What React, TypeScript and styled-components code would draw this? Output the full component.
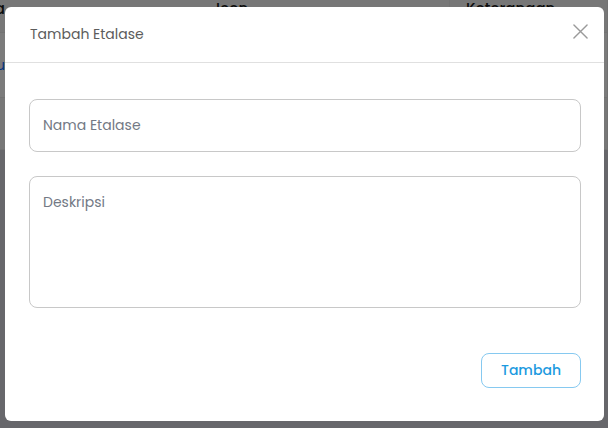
import styled, { createGlobalStyle } from 'styled-components';

const GlobalStyle = createGlobalStyle`
  html, body {
    margin: 0;
    padding: 0;
    background: #ffffff;
    font-family: Poppins, 'Open Sans', 'Liberation Sans', sans-serif;
  }
  * {
    box-sizing: border-box;
  }
`;

const Page = styled.div`
  width: 608px;
  height: 428px;
  overflow: hidden;
  background: #cfcfd6;
`;

const Table = styled.div`
  margin-left: -40px;
  background: #f5f5f5;
`;

const TableRow = styled.div<{ $height: number; $bg?: string; $top?: boolean }>`
  display: grid;
  grid-template-columns: 240px 250px 1fr;
  height: ${({ $height }) => $height}px;
  background: ${({ $bg }) => $bg ?? '#f5f5f5'};
  border-bottom: 1px solid #e4e4e4;
  align-items: ${({ $top }) => ($top ? 'start' : 'center')};
`;

const Cell = styled.div<{ $bold?: boolean; $link?: boolean }>`
  height: 100%;
  padding: 0 16px;
  display: flex;
  align-items: inherit;
  font-size: 15px;
  line-height: 18px;
  font-weight: ${({ $bold }) => ($bold ? 500 : 400)};
  color: ${({ $link }) => ($link ? '#0d6efd' : '#1a1a1a')};
  border-right: 1px solid #e4e4e4;
`;

const FirstCell = styled(Cell)`
  justify-content: flex-end;
  padding-right: 0;
  margin-right: 195px;
  border-right: none;
`;

const Overlay = styled.div`
  position: fixed;
  inset: 0;
  background: rgba(0, 0, 0, 0.5);
  padding: 7px 4px 0 5px;
`;

const Modal = styled.div`
  width: 599px;
  height: 414px;
  background: #ffffff;
  border-radius: 6px;
  display: flex;
  flex-direction: column;
`;

const Header = styled.div`
  height: 56px;
  padding: 0 12px 0 25px;
  display: flex;
  align-items: center;
  justify-content: space-between;
  border-bottom: 1px solid #e0e0e0;
`;

const Title = styled.h5`
  margin: 0;
  font-size: 14px;
  font-weight: 400;
  color: #5c5c5c;
`;

const CloseButton = styled.button`
  width: 24px;
  height: 24px;
  padding: 0;
  border: none;
  background: transparent;
  display: flex;
  align-items: center;
  justify-content: center;
  color: #9a9a9a;
  cursor: pointer;
  margin-top: -6px;
`;

const Body = styled.div`
  padding: 36px 23px 0 24px;
  display: flex;
  flex-direction: column;
  gap: 24px;
`;

const TextInput = styled.input`
  height: 53px;
  width: 100%;
  padding: 0 13px;
  border: 1px solid #c8c8c8;
  border-radius: 8px;
  font-family: inherit;
  font-size: 14px;
  color: #333;
  outline: none;

  &::placeholder {
    color: #737985;
  }
`;

const TextArea = styled.textarea`
  height: 132px;
  width: 100%;
  padding: 15px 13px;
  border: 1px solid #c8c8c8;
  border-radius: 8px;
  font-family: inherit;
  font-size: 14px;
  color: #333;
  resize: none;
  outline: none;

  &::placeholder {
    color: #737985;
  }
`;

const Footer = styled.div`
  display: flex;
  justify-content: flex-end;
  padding: 45px 23px 0 24px;
`;

const SubmitButton = styled.button`
  width: 100px;
  height: 35px;
  border: 1px solid #86c9f0;
  border-radius: 8px;
  background: #ffffff;
  color: #1c9ae0;
  font-family: inherit;
  font-size: 14px;
  font-weight: 500;
  cursor: pointer;
`;

const App = () => {
  return (
    <>
      <GlobalStyle />
      <Page>
        <Table>
          <TableRow $height={33} $bg="#eeeeee" $top>
            <FirstCell $bold>Nama</FirstCell>
            <Cell $bold>Icon</Cell>
            <Cell $bold>Keterangan</Cell>
          </TableRow>
          <TableRow $height={65} $bg="#f6f6f6">
            <FirstCell $link>Baju</FirstCell>
            <Cell />
            <Cell />
          </TableRow>
          <TableRow $height={52} $bg="#efefef">
            <FirstCell />
            <Cell />
            <Cell />
          </TableRow>
        </Table>
        <Overlay>
          <Modal>
            <Header>
              <Title>Tambah Etalase</Title>
              <CloseButton aria-label="Close">
                <svg width="15" height="15" viewBox="0 0 16 16" fill="none">
                  <path d="M1 1L15 15M15 1L1 15" stroke="currentColor" strokeWidth="1.5" strokeLinecap="round" />
                </svg>
              </CloseButton>
            </Header>
            <Body>
              <TextInput placeholder="Nama Etalase" />
              <TextArea placeholder="Deskripsi" />
            </Body>
            <Footer>
              <SubmitButton>Tambah</SubmitButton>
            </Footer>
          </Modal>
        </Overlay>
      </Page>
    </>
  );
};

export default App;
